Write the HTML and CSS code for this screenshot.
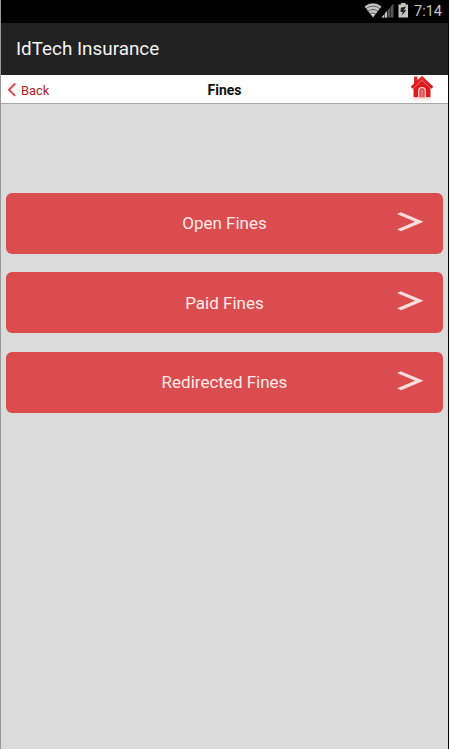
FILE: index.html
```html
<!DOCTYPE html>
<html lang="en">
<head>
<meta charset="utf-8">
<title>IdTech Insurance</title>
<link rel="stylesheet" href="styles.css">
</head>
<body>
<div class="screen">
  <div class="status">
    <svg class="status-icons" width="46" height="20" viewBox="0 0 46 20">
      <path d="M0.500 6.500Q9 0 17.500 6.500L9 17.500Z" fill="#c4c4c4"/>
      <path d="M1.800 8.800Q9 3.300 16.200 8.800M3.900 11.300Q9 7.600 14.100 11.300M6 13.900Q9 12 12 13.900" fill="none" stroke="#444" stroke-width=".8"/>
      <path d="M17.500 17.500L29.500 3.500V17.500Z" fill="#555"/>
      <path d="M17.500 17.500L23 11V17.500Z" fill="#c4c4c4"/>
      <path d="M20.500 13v5M23.500 10v8M26.500 6v12" stroke="#161616" stroke-width=".6"/>
      <path d="M34.500 4.500H37V3h4.500v1.500H44V17.500h-9.500Z" fill="#c4c4c4"/>
      <path d="M42 6.500l-5.200 1.200-.3 4.300h2.300l-1.300 3.800 4.900-5.500h-2.300Z" fill="#222"/>
    </svg>
    <span class="clock">7:14</span>
  </div>
  <header class="appbar">IdTech Insurance</header>
  <nav class="navbar">
    <a class="back"><svg width="10" height="16" viewBox="0 0 10 16"><path d="M8.200 1.500L2 7.700l6.200 6.200" fill="none" stroke="#df4b4b" stroke-width="2"/></svg><span>Back</span></a>
    <h1 class="title">Fines</h1>
    <a class="home"><svg width="24" height="28" viewBox="0 0 24 28">
      <defs>
        <linearGradient id="roof" x2="0" y2="1"><stop stop-color="#ee3434"/><stop offset="1" stop-color="#cf0f14"/></linearGradient>
        <linearGradient id="shade" x2="0" y2="1"><stop stop-color="#fbdcd9"/><stop offset="1" stop-color="#fff"/></linearGradient>
      </defs>
      <path d="M3.500 23h17v4.500h-17z" fill="url(#shade)"/>
      <path d="M3.500 12.500L12 5l8.500 7.500V22.300h-17Z" fill="#df191d"/>
      <path d="M4 1.500h3.500V5L12 .7l11.300 11-2 2L12 5.200l-9.300 8.500-2-2L4 8.500Z" fill="url(#roof)"/>
      <path d="M3 13.600L12 5.400l9 8.200" fill="none" stroke="#f49a97" stroke-width=".6"/>
      <path d="M8.700 22.300v-7.300Q9 12.500 12 12.500t3.300 2.500v7.300Z" fill="#e54b4b"/>
      <path d="M8.700 22.300v-7.300Q9 12.500 12 12.500t3.300 2.500v7.300" fill="none" stroke="#ffd8d5" stroke-width="1.200"/>
      <path d="M12 15v7.300" stroke="#f29d99" stroke-width="1"/>
    </svg></a>
  </nav>
  <main class="menu">
    <a class="item"><span>Open Fines</span><svg class="arrow" width="27" height="20" viewBox="0 0 27 20"><path d="M0 2L3.800.2 26.500 9.800 4 19.300.2 17.300 18 9.800Z" fill="#f9dcdc"/></svg></a>
    <a class="item"><span>Paid Fines</span><svg class="arrow" width="27" height="20" viewBox="0 0 27 20"><path d="M0 2L3.800.2 26.500 9.800 4 19.300.2 17.300 18 9.800Z" fill="#f9dcdc"/></svg></a>
    <a class="item"><span>Redirected Fines</span><svg class="arrow" width="27" height="20" viewBox="0 0 27 20"><path d="M0 2L3.800.2 26.500 9.800 4 19.300.2 17.300 18 9.800Z" fill="#f9dcdc"/></svg></a>
  </main>
</div>
</body>
</html>
```
FILE: styles.css
```css
* { box-sizing: border-box; }
body { margin: 0; font-family: Roboto, "Liberation Sans", sans-serif; }
svg { display: block; flex: none; }
.screen {
  display: flex;
  flex-direction: column;
  height: 749px;
  border-left: 1px solid #999;
  border-right: 1px solid #000;
  background: #dbdbdb;
}
.status {
  display: flex;
  justify-content: flex-end;
  height: 23px;
  padding-right: 6px;
  background: #000;
  color: #c4c4c4;
}
.clock {
  width: 28px;
  margin-left: 4px;
  font-size: 14.500px;
  line-height: 23px;
  white-space: nowrap;
}
.appbar {
  height: 52px;
  padding-left: 15px;
  background: #222;
  color: #f3f3f3;
  font-size: 18.850px;
  line-height: 53px;
}
.navbar {
  display: grid;
  grid-template-columns: 1fr auto 1fr;
  height: 29px;
  background: #fff;
  border-bottom: 1px solid #a8a8a8;
}
.back {
  display: flex;
  align-items: center;
  gap: 4px;
  padding-left: 6px;
  color: #b5221e;
  font-size: 12.800px;
}
.title {
  margin: 0;
  color: #111;
  font-size: 14px;
  font-weight: 700;
  line-height: 30px;
}
.home {
  display: flex;
  justify-content: flex-end;
  padding-right: 14px;
}
.menu {
  display: flex;
  flex-direction: column;
  gap: 18.500px;
  padding: 88.900px 5px 0;
}
.item {
  display: grid;
  grid-template-columns: 46px 1fr 46px;
  align-items: center;
  height: 61px;
  border-radius: 6px;
  background: #da4c4e;
  color: #fbeaea;
  font-size: 17px;
  text-align: center;
}
.item span { grid-column: 2; }
.arrow { margin-bottom: 3px; }
```
